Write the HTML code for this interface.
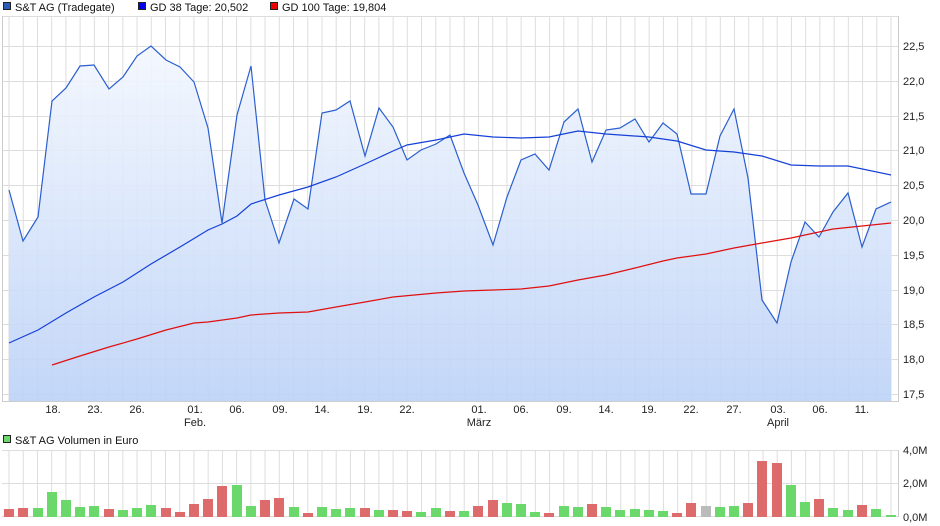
<!DOCTYPE html>
<html><head><meta charset="utf-8"><style>
html,body{margin:0;padding:0;background:#fff;}
svg{display:block;font-family:"Liberation Sans",sans-serif;}
</style></head><body>
<svg width="940" height="526" viewBox="0 0 940 526" xmlns="http://www.w3.org/2000/svg">
<defs>
<linearGradient id="g" x1="0" y1="0" x2="0" y2="1">
<stop offset="0" stop-color="#f3f7fe"/><stop offset="1" stop-color="#bcd2f7"/>
</linearGradient>
<pattern id="vg" x="8.5" y="0" width="14.226" height="600" patternUnits="userSpaceOnUse">
<rect x="0" y="0" width="1" height="600" fill="#dddddd"/>
</pattern>
</defs>
<!-- legend -->
<rect x="3.5" y="2.5" width="7" height="7" fill="#2a5cb8" stroke="#222" stroke-width="1"/>
<text x="15" y="11" font-size="11" fill="#111">S&amp;T AG (Tradegate)</text>
<rect x="138.5" y="2.5" width="7" height="7" fill="#0000ee" stroke="#222"/>
<text x="150" y="11" font-size="11" fill="#111">GD 38 Tage: 20,502</text>
<rect x="270.5" y="2.5" width="7" height="7" fill="#ee0000" stroke="#222"/>
<text x="282" y="11" font-size="11" fill="#111">GD 100 Tage: 19,804</text>
<!-- main grid -->
<rect x="2" y="16" width="896" height="385" fill="url(#vg)"/>
<g stroke="#dddddd" stroke-width="1">
<path d="M2 16.5H898M2 46.5H898M2 81.5H898M2 116.5H898M2 150.5H898M2 185.5H898M2 220.5H898M2 255.5H898M2 290.5H898M2 324.5H898M2 359.5H898M2 394.5H898"/>
</g>
<path d="M2.5 16V401.5H898.5V16" fill="none" stroke="#ccc"/>
<!-- area -->
<path fill="url(#g)" fill-opacity="0.9" stroke="none" d="M9,190 23,241 38,217 52,101 66,88 80,66 94,65 109,89 123,77 137,56 151,46 166,60 180,67 194,82 208,128 222,223 237,115 251,66 265,200 279,243 294,199 308,209 322,113 336,110 350,101 365,156 379,108 393,127 407,160 421,150 436,144 450,135 464,173 478,205 493,245 507,197 521,160 535,154 549,170 564,122 578,109 592,162 606,130 620,128 635,119 649,142 663,123 677,134 691,194 706,194 720,136 734,109 748,178 762,300 777,323 791,262 805,222 819,237 833,212 848,193 862,247 876,209 891,202 L891,401 9,401Z"/>
<polyline fill="none" stroke="#2b5fcf" stroke-width="1.2" points="9,190 23,241 38,217 52,101 66,88 80,66 94,65 109,89 123,77 137,56 151,46 166,60 180,67 194,82 208,128 222,223 237,115 251,66 265,200 279,243 294,199 308,209 322,113 336,110 350,101 365,156 379,108 393,127 407,160 421,150 436,144 450,135 464,173 478,205 493,245 507,197 521,160 535,154 549,170 564,122 578,109 592,162 606,130 620,128 635,119 649,142 663,123 677,134 691,194 706,194 720,136 734,109 748,178 762,300 777,323 791,262 805,222 819,237 833,212 848,193 862,247 876,209 891,202"/>
<polyline fill="none" stroke="#1540d8" stroke-width="1.2" points="9,343 38,330 66,313 94,297 123,282 151,264 180,247 208,230 222,224 237,216 251,204 279,195 308,187 336,177 365,164 393,151 407,145 436,140 464,134 493,137 521,138 549,137 578,131 606,134 649,137 677,141 706,150 734,152 762,156 791,165 819,166 848,166 891,175"/>
<polyline fill="none" stroke="#e01010" stroke-width="1.2" points="52,365 80,356 109,347 137,339 166,330 194,323 208,322 237,318 251,315 279,313 308,312 336,307 365,302 393,297 436,293 464,291 493,290 521,289 549,286 578,280 606,275 635,268 663,261 677,258 706,254 734,248 762,243 791,238 819,232 833,229 862,226 891,223"/>
<!-- y labels -->
<g font-size="11" fill="#222">
<text x="903" y="50">22,5</text><text x="903" y="85">22,0</text><text x="903" y="120">21,5</text><text x="903" y="154">21,0</text><text x="903" y="189">20,5</text><text x="903" y="224">20,0</text><text x="903" y="259">19,5</text><text x="903" y="294">19,0</text><text x="903" y="328">18,5</text><text x="903" y="363">18,0</text><text x="903" y="398">17,5</text>
</g>
<!-- x labels -->
<g font-size="11" fill="#222" text-anchor="middle">
<text x="53" y="413">18.</text><text x="95" y="413">23.</text><text x="137" y="413">26.</text><text x="195" y="413">01.</text><text x="237" y="413">06.</text><text x="280" y="413">09.</text><text x="322" y="413">14.</text><text x="365" y="413">19.</text><text x="407" y="413">22.</text><text x="479" y="413">01.</text><text x="521" y="413">06.</text><text x="564" y="413">09.</text><text x="606" y="413">14.</text><text x="649" y="413">19.</text><text x="691" y="413">22.</text><text x="734" y="413">27.</text><text x="778" y="413">03.</text><text x="820" y="413">06.</text><text x="862" y="413">11.</text>
<text x="195" y="426">Feb.</text><text x="479" y="426">März</text><text x="778" y="426">April</text>
</g>
<!-- volume legend -->
<rect x="3.5" y="435.5" width="7" height="7" fill="#6bd86b" stroke="#222"/>
<text x="15" y="444" font-size="11" fill="#111">S&amp;T AG Volumen in Euro</text>
<rect x="2" y="450" width="896" height="67" fill="url(#vg)"/>
<path d="M2 450.5H898M2 483.5H898M2 516.5H898" stroke="#dddddd"/>
<path d="M898.5 450V517" stroke="#ccc"/>
<g font-size="11" fill="#222"><text x="903" y="454">4,0M</text><text x="903" y="487">2,0M</text><text x="903" y="521">0,0M</text></g>
<g>
<path fill="#dd6b6b" d="M4 509h10v8H4zM18 508h10v9H18zM104 509h10v8h-10zM161 508h10v9h-10zM175 512h10v5h-10zM189 504h10v13h-10zM203 499h10v18h-10zM217 486h10v31h-10zM260 500h10v17h-10zM274 498h10v19h-10zM303 513h10v4h-10zM360 508h10v9h-10zM388 510h10v7h-10zM402 511h10v6h-10zM445 511h10v6h-10zM473 506h10v11h-10zM488 500h10v17h-10zM544 513h10v4h-10zM587 504h10v13h-10zM672 513h10v4h-10zM686 503h10v14h-10zM743 503h10v14h-10zM757 461h10v56h-10zM772 463h10v54h-10zM814 499h10v18h-10zM857 505h10v12h-10z"/>
<path fill="#6bd86b" d="M33 508h10v9H33zM47 492h10v25H47zM61 500h10v17H61zM75 507h10v10H75zM89 506h10v11H89zM118 510h10v7h-10zM132 508h10v9h-10zM146 505h10v12h-10zM232 485h10v32h-10zM246 506h10v11h-10zM289 507h10v10h-10zM317 507h10v10h-10zM331 509h10v8h-10zM345 508h10v9h-10zM374 510h10v7h-10zM416 512h10v5h-10zM431 508h10v9h-10zM459 511h10v6h-10zM502 503h10v14h-10zM516 504h10v13h-10zM530 512h10v5h-10zM559 506h10v11h-10zM573 507h10v10h-10zM601 507h10v10h-10zM615 510h10v7h-10zM630 509h10v8h-10zM644 510h10v7h-10zM658 511h10v6h-10zM715 507h10v10h-10zM729 506h10v11h-10zM786 485h10v32h-10zM800 502h10v15h-10zM828 508h10v9h-10zM843 510h10v7h-10zM871 509h10v8h-10zM886 515h10v2h-10z"/>
<path fill="#bbbbbb" d="M701 506h10v11h-10z"/>
</g>
</svg>
</body></html>
